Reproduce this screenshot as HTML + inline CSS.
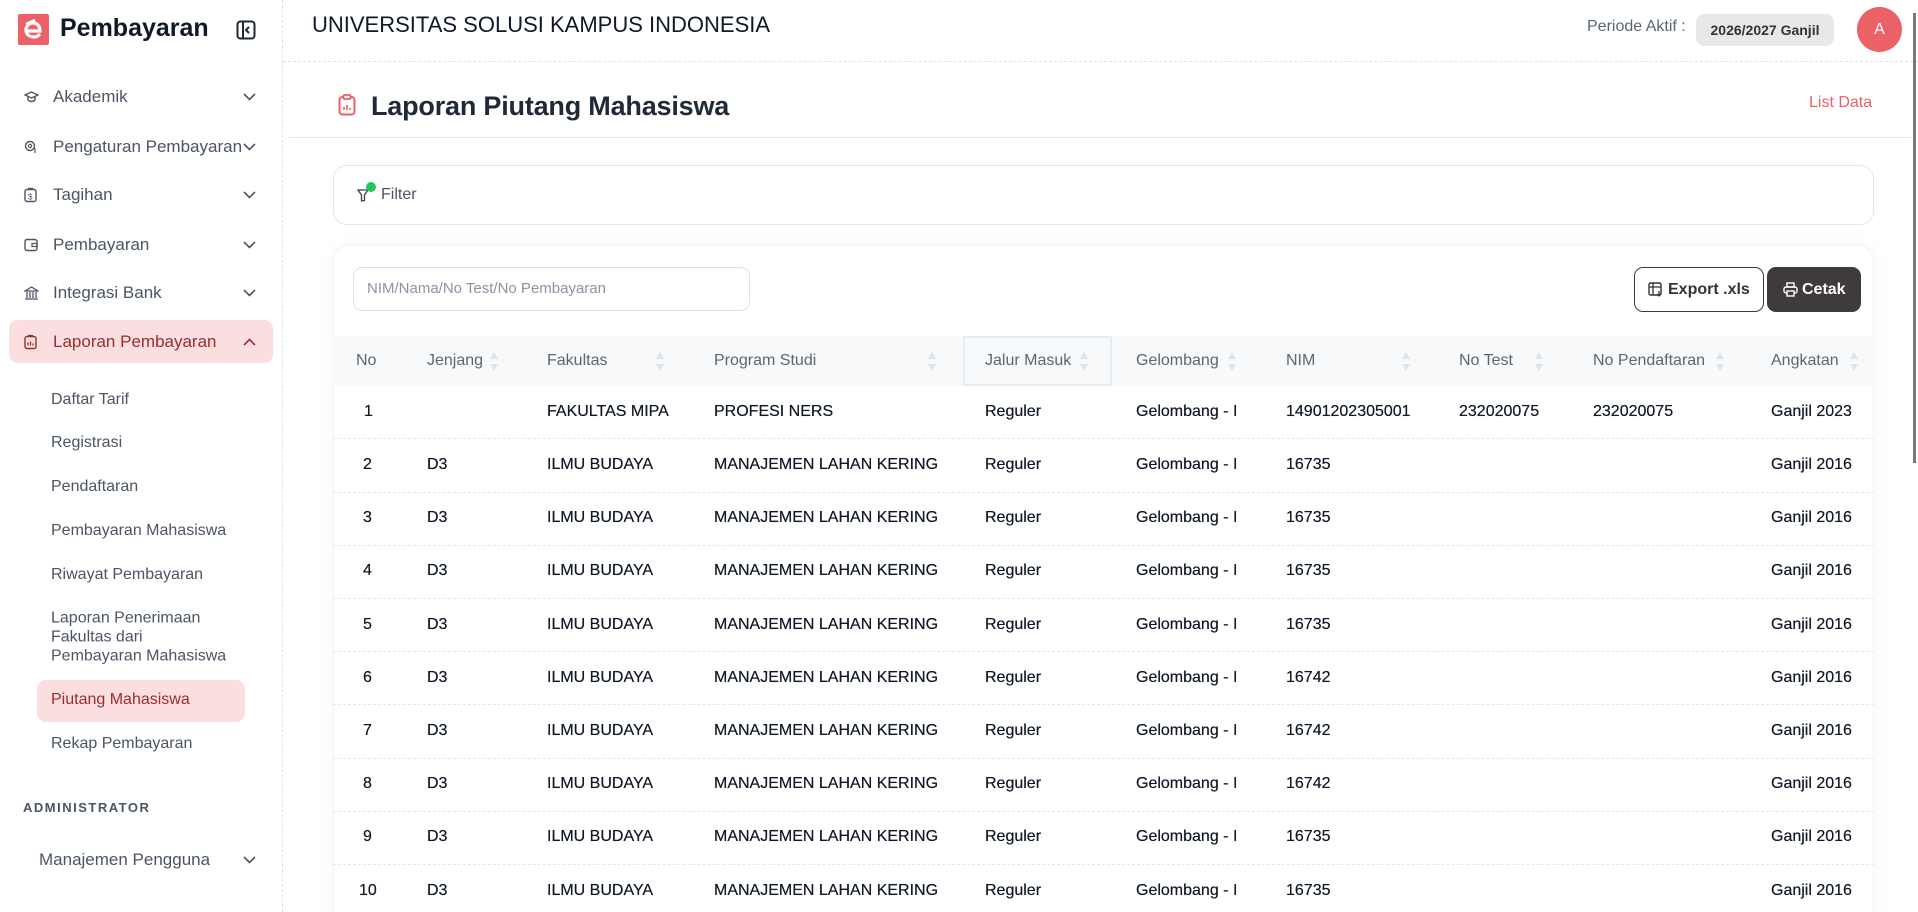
<!DOCTYPE html>
<html style="width:1918px;height:912px;overflow:hidden"><head><meta charset="utf-8">
<style>
*{box-sizing:border-box;margin:0;padding:0}
body{width:1918px;height:912px;overflow:hidden;background:#fff;font-family:"Liberation Sans",Arial,sans-serif;position:relative;color:#1f2937}
.a{position:absolute;white-space:nowrap}
.side{position:absolute;left:0;top:0;width:283px;height:912px;border-right:1px dashed #dfe3e8}
.mi{position:absolute;left:53px;font-size:17px;color:#4b5563;transform:translateY(-50%)}
.ic{position:absolute;left:24px;transform:translateY(-50%)}
.chev{position:absolute;left:243px;transform:translateY(-50%)}
.sub{position:absolute;left:51px;font-size:16px;color:#4b5563;transform:translateY(-50%)}
.th{position:absolute;top:361px;transform:translateY(-50%);font-size:16px;color:#5b6673}
.sort{position:absolute;top:352px}
.td{position:absolute;transform:translateY(-50%);font-size:16px;font-weight:normal;color:#111827;text-shadow:0 0 0.4px #111827}
.rl{position:absolute;left:333px;width:1541px;border-top:1px dashed #e3e6ea}
</style></head><body>
<div style="position:absolute;left:0;top:0;width:1918px;height:912px;overflow:hidden">
<div class="side"></div>
<div class="a" style="left:18px;top:14px;width:31px;height:31px;background:#eb6166;border-radius:2px"></div>
<svg class="a" style="left:18px;top:14px" width="31" height="31" viewBox="0 0 31 31"><path d="M9 17h13c0-5-3-8-7-8s-7 3-7 7 3 7 8 7c2 0 4-1 5-2" fill="none" stroke="#fff" stroke-width="3.2" stroke-linecap="round"/><path d="M8 10l9-4" stroke="#fff" stroke-width="2.5"/></svg>
<div class="a" style="left:60px;top:14px;font-size:25px;font-weight:bold;color:#111827">Pembayaran</div>
<svg class="a" style="left:236px;top:20px" width="20" height="20" viewBox="0 0 20 20"><rect x="1.5" y="1.5" width="17" height="17" rx="3" fill="none" stroke="#1f2937" stroke-width="2"/><path d="M7 2v16" stroke="#1f2937" stroke-width="2"/><path d="M13 7l-3 3 3 3" fill="none" stroke="#1f2937" stroke-width="2"/></svg>

<svg class="ic" style="top:97px" width="15" height="12" viewBox="0 0 15 12"><path d="M1 4l6.5-3 6.5 3-6.5 3z M4 5.5v3.5c2 2 5 2 7 0V5.5" fill="none" stroke="#4b5563" stroke-width="1.4"/></svg>
<div class="mi" style="top:97px">Akademik</div>
<svg class="ic" style="top:147px" width="14" height="14" viewBox="0 0 14 14"><circle cx="6" cy="6" r="4.5" fill="none" stroke="#4b5563" stroke-width="1.4"/><circle cx="6" cy="6" r="1.6" fill="none" stroke="#4b5563" stroke-width="1.2"/><path d="M11 8v5" stroke="#4b5563" stroke-width="1.2"/></svg>
<div class="mi" style="top:147px">Pengaturan Pembayaran</div>
<svg class="ic" style="top:195px" width="13" height="15" viewBox="0 0 13 15"><rect x="1" y="2" width="11" height="12" rx="2" fill="none" stroke="#4b5563" stroke-width="1.4"/><path d="M4 1h5" stroke="#4b5563" stroke-width="1.4"/><text x="4" y="12" font-size="8" fill="#4b5563" font-family="Liberation Sans">$</text></svg>
<div class="mi" style="top:195px">Tagihan</div>
<svg class="ic" style="top:245px" width="14" height="13" viewBox="0 0 14 13"><rect x="1" y="1" width="12" height="11" rx="2" fill="none" stroke="#4b5563" stroke-width="1.4"/><rect x="8" y="5" width="5" height="3" fill="none" stroke="#4b5563" stroke-width="1.2"/></svg>
<div class="mi" style="top:245px">Pembayaran</div>
<svg class="ic" style="top:293px" width="15" height="14" viewBox="0 0 15 14"><path d="M1 5l6.5-4 6.5 4z M1 13h13 M3 6v6 M6 6v6 M9 6v6 M12 6v6" fill="none" stroke="#4b5563" stroke-width="1.3"/></svg>
<div class="mi" style="top:293px">Integrasi Bank</div>
<div class="a" style="left:9px;top:320px;width:264px;height:43px;background:#fbdfe0;border-radius:9px"></div>
<svg class="ic" style="top:342px" width="13" height="15" viewBox="0 0 13 15"><rect x="1" y="2" width="11" height="12" rx="2" fill="none" stroke="#9b2c2c" stroke-width="1.4"/><path d="M4 1h5 M4 11V8 M6.5 11V7 M9 11V9" stroke="#9b2c2c" stroke-width="1.3"/></svg>
<div class="mi" style="top:342px;color:#9b2c2c">Laporan Pembayaran</div>
<svg class="chev" style="top:342px" width="13" height="8" viewBox="0 0 13 8"><path d="M1 7l5.5-5.5L12 7" fill="none" stroke="#9b2c2c" stroke-width="1.6"/></svg>
<svg class="chev" style="top:97px" width="13" height="8" viewBox="0 0 13 8"><path d="M1 1l5.5 5.5L12 1" fill="none" stroke="#4b5563" stroke-width="1.6"/></svg>
<svg class="chev" style="top:147px" width="13" height="8" viewBox="0 0 13 8"><path d="M1 1l5.5 5.5L12 1" fill="none" stroke="#4b5563" stroke-width="1.6"/></svg>
<svg class="chev" style="top:195px" width="13" height="8" viewBox="0 0 13 8"><path d="M1 1l5.5 5.5L12 1" fill="none" stroke="#4b5563" stroke-width="1.6"/></svg>
<svg class="chev" style="top:245px" width="13" height="8" viewBox="0 0 13 8"><path d="M1 1l5.5 5.5L12 1" fill="none" stroke="#4b5563" stroke-width="1.6"/></svg>
<svg class="chev" style="top:293px" width="13" height="8" viewBox="0 0 13 8"><path d="M1 1l5.5 5.5L12 1" fill="none" stroke="#4b5563" stroke-width="1.6"/></svg>

<div class="sub" style="top:400px">Daftar Tarif</div>
<div class="sub" style="top:443px">Registrasi</div>
<div class="sub" style="top:487px">Pendaftaran</div>
<div class="sub" style="top:531px">Pembayaran Mahasiswa</div>
<div class="sub" style="top:575px">Riwayat Pembayaran</div>
<div class="sub" style="top:637px;line-height:19px;white-space:normal">Laporan Penerimaan<br>Fakultas dari<br>Pembayaran Mahasiswa</div>
<div class="a" style="left:37px;top:680px;width:208px;height:42px;background:#fbdfe0;border-radius:9px"></div>
<div class="sub" style="top:700px;color:#9b2c2c">Piutang Mahasiswa</div>
<div class="sub" style="top:744px">Rekap Pembayaran</div>
<div class="a" style="left:23px;top:800px;font-size:13px;font-weight:bold;letter-spacing:1.5px;color:#4b5563">ADMINISTRATOR</div>
<div class="mi" style="left:39px;top:860px">Manajemen Pengguna</div>
<svg class="chev" style="top:860px" width="13" height="8" viewBox="0 0 13 8"><path d="M1 1l5.5 5.5L12 1" fill="none" stroke="#4b5563" stroke-width="1.6"/></svg>

<div class="a" style="left:312px;top:12px;font-size:22px;color:#111827">UNIVERSITAS SOLUSI KAMPUS INDONESIA</div>
<div class="a" style="left:1587px;top:18px;font-size:16px;color:#5b6673">Periode Aktif :</div>
<div class="a" style="left:1696px;top:14px;width:138px;height:32px;background:#e8e8e8;border-radius:8px;font-size:14px;font-weight:bold;color:#333;text-align:center;line-height:32px">2026/2027 Ganjil</div>
<div class="a" style="left:1857px;top:7px;width:45px;height:45px;border-radius:50%;background:#eb6166;color:#fff;font-size:16px;text-align:center;line-height:45px">A</div>
<div class="a" style="left:283px;top:61px;width:1635px;border-top:1px dashed #dfe3e8"></div>
<div class="a" style="left:1913px;top:13px;width:3px;height:450px;background:#7a7a7a"></div>

<svg class="a" style="left:338px;top:94px" width="18" height="22" viewBox="0 0 18 22"><rect x="1.5" y="3" width="15" height="17.5" rx="3" fill="none" stroke="#eb6166" stroke-width="2"/><rect x="5.5" y="1" width="7" height="4" rx="1" fill="#fff" stroke="#eb6166" stroke-width="1.8"/><path d="M6 16v-3 M9 16v-5 M12 16v-2" stroke="#eb6166" stroke-width="1.6"/></svg>
<div class="a" style="left:371px;top:91px;font-size:27px;font-weight:bold;color:#1f2937;letter-spacing:-0.2px">Laporan Piutang Mahasiswa</div>
<div class="a" style="left:1809px;top:94px;font-size:16px;color:#eb6166">List Data</div>
<div class="a" style="left:289px;top:137px;width:1622px;border-top:1px solid #e5e7eb"></div>

<div class="a" style="left:333px;top:165px;width:1541px;height:60px;border:1px solid #e3e6ea;border-radius:14px"></div>
<svg class="a" style="left:357px;top:189px" width="12" height="13" viewBox="0 0 12 13"><path d="M1 1h10L7.5 6v5.5L4.5 12V6z" fill="none" stroke="#374151" stroke-width="1.3"/></svg>
<div class="a" style="left:366px;top:182px;width:10px;height:10px;border-radius:50%;background:#22c55e"></div>
<div class="a" style="left:381px;top:186px;font-size:16px;color:#4b5563">Filter</div>

<div class="a" style="left:333px;top:245px;width:1541px;height:700px;border-radius:16px;box-shadow:0 0 18px rgba(0,0,0,0.04);border:1px solid #f3f4f6"></div>
<div class="a" style="left:353px;top:267px;width:397px;height:44px;border:1px solid #dfe3e8;border-radius:9px;font-size:15px;color:#8a94a3;line-height:42px;padding-left:13px">NIM/Nama/No Test/No Pembayaran</div>
<div class="a" style="left:1634px;top:267px;width:130px;height:45px;border:1px solid #3f3b3b;border-radius:9px;font-size:16px;font-weight:bold;color:#333;line-height:43px;padding-left:33px">Export .xls</div>
<svg class="a" style="left:1648px;top:282px" width="15" height="15" viewBox="0 0 15 15"><rect x="1" y="1" width="12" height="12" rx="1.5" fill="none" stroke="#333" stroke-width="1.4"/><path d="M1 5h12 M5 1v12 M11 9v5 M9 12l2 2 2-2" fill="none" stroke="#333" stroke-width="1.3"/></svg>
<div class="a" style="left:1767px;top:267px;width:94px;height:45px;background:#3f3b3b;border-radius:9px;font-size:16px;font-weight:bold;color:#fff;line-height:45px;padding-left:35px">Cetak</div>
<svg class="a" style="left:1783px;top:282px" width="15" height="15" viewBox="0 0 15 15"><rect x="4" y="1" width="7" height="4" fill="none" stroke="#fff" stroke-width="1.4"/><rect x="1" y="5" width="13" height="6" rx="2" fill="none" stroke="#fff" stroke-width="1.4"/><rect x="4" y="9" width="7" height="5" fill="#3f3b3b" stroke="#fff" stroke-width="1.4"/></svg>

<div class="a" style="left:333px;top:336px;width:1541px;height:50px;background:#f7f9fb"></div>
<div class="a" style="left:963px;top:336px;width:149px;height:50px;border:2px solid #e9ecef"></div>
<div class="th" style="left:356px">No</div>
<div class="th" style="left:427px">Jenjang</div>
<div class="th" style="left:547px">Fakultas</div>
<div class="th" style="left:714px">Program Studi</div>
<div class="th" style="left:985px">Jalur Masuk</div>
<div class="th" style="left:1136px">Gelombang</div>
<div class="th" style="left:1286px">NIM</div>
<div class="th" style="left:1459px">No Test</div>
<div class="th" style="left:1593px">No Pendaftaran</div>
<div class="th" style="left:1771px">Angkatan</div>
<svg width="0" height="0" style="position:absolute"><defs><g id="s"><path d="M4 0L8 7H0z M4 19L8 12H0z" fill="#dfe4ea"/></g></defs></svg>
<svg class="sort" style="left:490px" width="9" height="19"><use href="#s"/></svg>
<svg class="sort" style="left:656px" width="9" height="19"><use href="#s"/></svg>
<svg class="sort" style="left:928px" width="9" height="19"><use href="#s"/></svg>
<svg class="sort" style="left:1080px" width="9" height="19"><use href="#s"/></svg>
<svg class="sort" style="left:1228px" width="9" height="19"><use href="#s"/></svg>
<svg class="sort" style="left:1402px" width="9" height="19"><use href="#s"/></svg>
<svg class="sort" style="left:1535px" width="9" height="19"><use href="#s"/></svg>
<svg class="sort" style="left:1716px" width="9" height="19"><use href="#s"/></svg>
<svg class="sort" style="left:1850px" width="9" height="19"><use href="#s"/></svg>

<div id="rows"></div>
<div class="td" style="top:412px;left:364px">1</div>
<div class="td" style="top:412px;left:547px">FAKULTAS MIPA</div>
<div class="td" style="top:412px;left:714px">PROFESI NERS</div>
<div class="td" style="top:412px;left:985px">Reguler</div>
<div class="td" style="top:412px;left:1136px">Gelombang - I</div>
<div class="td" style="top:412px;left:1286px">14901202305001</div>
<div class="td" style="top:412px;left:1459px">232020075</div>
<div class="td" style="top:412px;left:1593px">232020075</div>
<div class="td" style="top:412px;left:1771px">Ganjil 2023</div>
<div class="rl" style="top:438px"></div>
</div>
<script>
var nims=["16735","16735","16735","16735","16742","16742","16742","16735","16735"];
var h="";
for(var i=0;i<9;i++){var y=465+i*53.2;var n=i+2;
h+='<div class="td" style="top:'+y+'px;left:'+(n<10?363:359)+'px">'+n+'</div>'+
'<div class="td" style="top:'+y+'px;left:427px">D3</div>'+
'<div class="td" style="top:'+y+'px;left:547px">ILMU BUDAYA</div>'+
'<div class="td" style="top:'+y+'px;left:714px">MANAJEMEN LAHAN KERING</div>'+
'<div class="td" style="top:'+y+'px;left:985px">Reguler</div>'+
'<div class="td" style="top:'+y+'px;left:1136px">Gelombang - I</div>'+
'<div class="td" style="top:'+y+'px;left:1286px">'+nims[i]+'</div>'+
'<div class="td" style="top:'+y+'px;left:1771px">Ganjil 2016</div>'+
(i<8?'<div class="rl" style="top:'+(y+26.6)+'px"></div>':'');}
document.getElementById('rows').innerHTML=h;
</script>
</body></html>
